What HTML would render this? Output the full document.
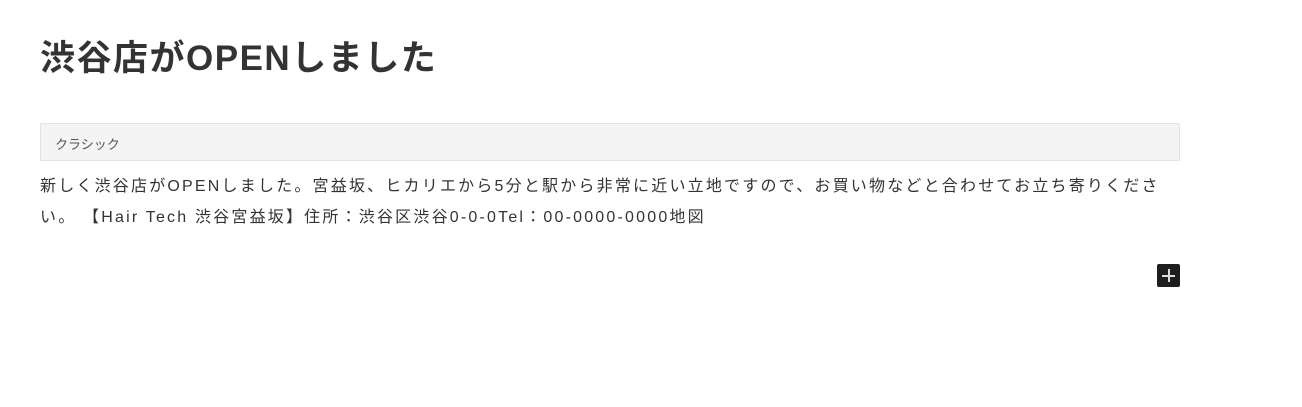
<!DOCTYPE html>
<html><head><meta charset="utf-8"><style>
body{margin:0;background:#fff;font-family:"Liberation Sans","Noto Sans CJK JP",sans-serif;color:#333;}
h1{position:absolute;left:40px;top:36px;margin:0;font-size:35px;font-weight:bold;line-height:46px;color:#333;letter-spacing:1.5px;white-space:nowrap;}
.box{position:absolute;left:40px;top:123px;width:1138px;height:36px;background:#f4f4f4;border:1px solid #e2e2e2;border-radius:2px;}
.box span{position:absolute;left:14px;top:10px;font-size:13px;color:#555;}
p{position:absolute;left:40px;top:171px;width:1240px;margin:0;font-size:16px;line-height:31px;color:#333;letter-spacing:2.2px;white-space:nowrap;}
.plus{position:absolute;left:1157px;top:264px;width:23px;height:23px;background:#1e1e1e;border-radius:2px;}
.plus:before{content:"";position:absolute;left:5px;top:10.5px;width:13px;height:2px;background:#ddd;}
.plus:after{content:"";position:absolute;left:10.5px;top:5px;width:2px;height:13px;background:#ddd;}
</style></head><body>
<h1>渋谷店がOPENしました</h1>
<div class="box"><span>クラシック</span></div>
<p>新しく渋谷店がOPENしました。宮益坂、ヒカリエから5分と駅から非常に近い立地ですので、お買い物などと合わせてお立ち寄りくださ<br>い。&nbsp;【Hair Tech 渋谷宮益坂】住所：渋谷区渋谷0-0-0Tel：00-0000-0000地図</p>
<div class="plus"></div>
</body></html>
